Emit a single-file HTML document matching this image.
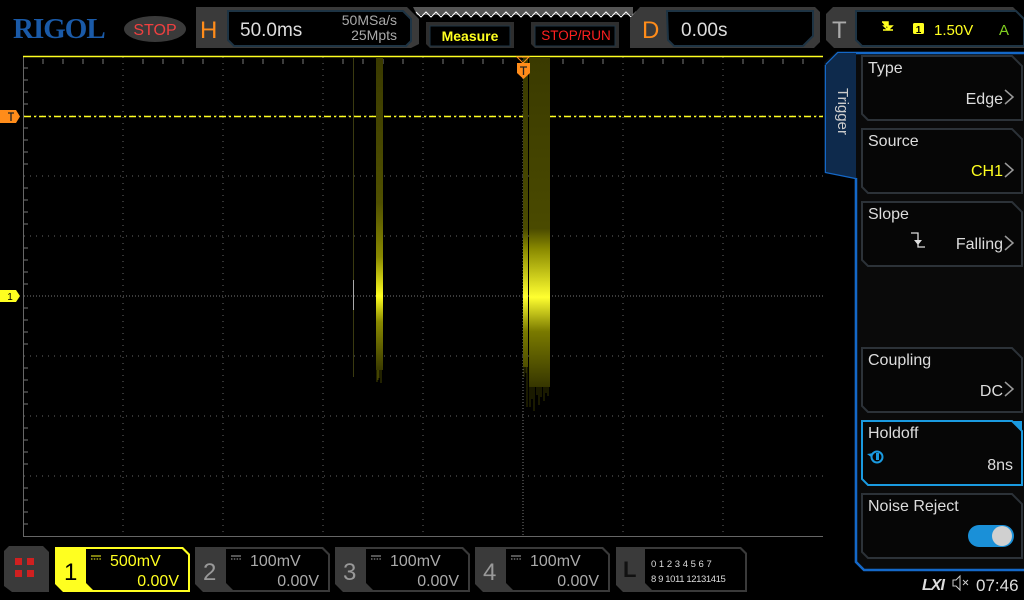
<!DOCTYPE html>
<html><head><meta charset="utf-8"><style>
body{margin:0;width:1024px;height:600px;background:#000;overflow:hidden;font-family:"Liberation Sans",sans-serif;position:relative}
.a{position:absolute}
</style></head><body>
<svg class="a" style="left:0;top:0" width="1024" height="600" viewBox="0 0 1024 600" font-family="Liberation Sans, sans-serif">
<defs>
<linearGradient id="g1" gradientUnits="userSpaceOnUse" x1="0" y1="57" x2="0" y2="380">
<stop offset="0" stop-color="#3a3a00"/><stop offset="0.45" stop-color="#505000"/><stop offset="0.62" stop-color="#8a8a00"/><stop offset="0.74" stop-color="#ffff20"/><stop offset="0.82" stop-color="#8a8a00"/><stop offset="1" stop-color="#2a2a00"/></linearGradient>
<linearGradient id="g2" gradientUnits="userSpaceOnUse" x1="0" y1="57" x2="0" y2="400">
<stop offset="0" stop-color="#3a3a00"/><stop offset="0.5" stop-color="#4a4a00"/><stop offset="0.56" stop-color="#8a8a00"/><stop offset="0.7" stop-color="#ffff30"/><stop offset="0.8" stop-color="#7a7a00"/><stop offset="1" stop-color="#262600"/></linearGradient>
</defs>
<text x="13" y="38" font-family="Liberation Serif, serif" font-weight="bold" font-size="29" fill="#1a5aa8" letter-spacing="-1">RIGOL</text>
<ellipse cx="155" cy="29" rx="31" ry="13" fill="#3a3a3a"/>
<text x="155" y="35" text-anchor="middle" font-size="16" fill="#f04040">STOP</text>
<path d="M196 7h211l12 12v25l-8 4H196z" fill="#3a3a3a"/>
<text x="200" y="38" font-size="24" fill="#ff8c1a">H</text>
<path d="M228 11h175l8 8v22l-5 5H234l-6-6z" fill="#000" stroke="#1e3444" stroke-width="2"/>
<text x="240" y="36" font-size="19" fill="#ddd">50.0ms</text>
<text x="397" y="25" font-size="14" fill="#aaa" text-anchor="end">50MSa/s</text>
<text x="397" y="40" font-size="14" fill="#aaa" text-anchor="end">25Mpts</text>
<path d="M413 7h220v8H417z" fill="#555"/>
<path d="M416 12 l5 5 5-5 5 5 5-5 5 5 5-5 5 5 5-5 5 5 5-5 5 5 5-5 5 5 5-5 5 5 5-5 5 5 5-5 5 5 5-5 5 5 5-5 5 5 5-5 5 5 5-5 5 5 5-5 5 5 5-5 5 5 5-5 5 5 5-5 5 5 5-5 5 5 5-5 5 5 5-5 5 5 5-5 5 5 5-5 5 5 5-5 5 5 5-5 5 5 5-5 5 5" fill="none" stroke="#fff" stroke-width="1"/>
<path d="M426 22h88v26h-84l-4-4z" fill="#2e2e2e"/><rect x="430" y="26" width="80" height="20" fill="#000" stroke="#1e3444"/>
<text x="470" y="41" text-anchor="middle" font-size="14" font-weight="bold" fill="#ffff20">Measure</text>
<path d="M531 22h88v26h-84l-4-4z" fill="#2e2e2e"/><rect x="535" y="26" width="80" height="20" fill="#000" stroke="#1e3444"/>
<text x="576" y="40" text-anchor="middle" font-size="13.5" fill="#ff2020">STOP/RUN</text>
<path d="M640 7h175l5 5v30l-6 6H630V18z" fill="#3a3a3a"/>
<text x="642" y="38" font-size="24" fill="#ff8c1a">D</text>
<path d="M667 11h146v25l-10 10H674l-6-6z" fill="#000" stroke="#1e3444" stroke-width="2"/>
<text x="681" y="36" font-size="19" fill="#ddd">0.00s</text>
<path d="M833 7h180l11 11v30H834l-8-8V14z" fill="#3a3a3a"/>
<text x="832" y="38" font-size="24" fill="#aaa">T</text>
<path d="M856 11h160l8 8v27H862l-6-6z" fill="#000" stroke="#1e3444" stroke-width="2"/>
<path d="M882 22h6v8M883 30h10M884 26l4 4 4-4z" stroke="#ffff20" fill="#ffff20" stroke-width="1.5"/>
<rect x="913" y="23" width="11" height="11" rx="1.5" fill="#ffff20"/><text x="918.5" y="33" font-size="10" text-anchor="middle" fill="#000" font-weight="bold">1</text>
<text x="934" y="35" font-size="15" fill="#ffff20">1.50V</text>
<text x="999" y="35" font-size="15" fill="#80d020">A</text>
<g stroke="#666" stroke-width="1" stroke-dasharray="1 5">
<path d="M123 57V536M223 57V536M323 57V536M423 57V536M623 57V536M723 57V536"/>
<path d="M24 116H823M24 176H823M24 236H823M24 356H823M24 416H823M24 476H823"/>
</g>
<path d="M24 296H823M523 57V536" stroke="#777" stroke-dasharray="1 2"/>
<path d="M23.5 57V536.5H823" stroke="#666" fill="none"/>
<g stroke="#777"><path d="M43 59v5M63 59v5M83 59v5M103 59v5M143 59v5M163 59v5M183 59v5M203 59v5M243 59v5M263 59v5M283 59v5M303 59v5M343 59v5M363 59v5M383 59v5M403 59v5M443 59v5M463 59v5M483 59v5M503 59v5M543 59v5M563 59v5M583 59v5M603 59v5M643 59v5M663 59v5M683 59v5M703 59v5M743 59v5M763 59v5M783 59v5M803 59v5"/>
<path d="M24 68h4M24 80h4M24 92h4M24 104h4M24 128h4M24 140h4M24 152h4M24 164h4M24 188h4M24 200h4M24 212h4M24 224h4M24 248h4M24 260h4M24 272h4M24 284h4M24 308h4M24 320h4M24 332h4M24 344h4M24 368h4M24 380h4M24 392h4M24 404h4M24 428h4M24 440h4M24 452h4M24 464h4M24 488h4M24 500h4M24 512h4M24 524h4"/></g>
<path d="M23 56.5H823" stroke="#ffff20" stroke-width="1.5"/>
<path d="M24 116.5H823" stroke="#ffff20" stroke-width="1.5" stroke-dasharray="7 3 2 3"/>
<rect x="353" y="57" width="1" height="320" fill="#3a3a10"/>
<rect x="353" y="280" width="1" height="30" fill="#aaa"/>
<rect x="376" y="57" width="7" height="313" fill="url(#g1)"/>
<path d="M377 370v12M379 370v8M381 370v13M378 370v10" stroke="#444400"/>
<rect x="523" y="57" width="5" height="310" fill="url(#g2)"/>
<rect x="529" y="57" width="21" height="330" fill="url(#g2)"/>
<path d="M524 367v10M526 367v6M530 387v20M532 387v12M534 387v24M537 387v8M539 387v18M541 387v10M544 387v14M546 387v6M548 387v9M527 367v40" stroke="#333300"/>
<path d="M0 110h16l4 6.5-4 6.5H0z" fill="#ff8c1a"/><path d="M8 113h6M11 113v8" stroke="#222" stroke-width="1.3"/>
<path d="M0 290h16l4 6-4 6H0z" fill="#ffff20"/><text x="10" y="300" font-size="10" text-anchor="middle" fill="#000">1</text>
<path d="M517 57h12l-6 6z" fill="none" stroke="#ff8c1a"/>
<path d="M517 63h13v10l-6.5 6-6.5-6z" fill="#ff8c1a"/><path d="M520 67h7M523.5 67v8" stroke="#222" stroke-width="1.3"/>
<path d="M857 52H1024V570H862l-8-8V178l-30-8V62l12-10" fill="#0a0a0a"/>
<path d="M826 65l12-12H1024M856 178L826 172V65M856 178V562l8 8H1024" fill="none" stroke="#1468c8" stroke-width="2.5"/>
<path d="M826 65l12-12h18v125l-30-6z" fill="#0e2a4c"/>
<text transform="translate(838 88) rotate(90)" font-size="15" fill="#ccc">Trigger</text>
<g fill="#060606" stroke="#2c3238" stroke-width="2">
<path d="M862 56h150l10 10v54H868l-6-6z"/>
<path d="M862 129h150l10 10v54H868l-6-6z"/>
<path d="M862 202h150l10 10v54H868l-6-6z"/>
<path d="M862 348h150l10 10v54H868l-6-6z"/>
<path d="M862 494h150l10 10v54H868l-6-6z"/>
</g>
<path d="M862 421h150l10 10v54H868l-6-6z" fill="#060606" stroke="#1a9ae0" stroke-width="2"/>
<path d="M1012 421l10 10v-10z" fill="#1a9ae0"/>
<g font-size="16" fill="#ddd">
<text x="868" y="73">Type</text><text x="1003" y="104" text-anchor="end">Edge</text>
<text x="868" y="146">Source</text><text x="1003" y="176" text-anchor="end" fill="#ffff20">CH1</text>
<text x="868" y="219">Slope</text><text x="1003" y="249" text-anchor="end">Falling</text>
<text x="868" y="365">Coupling</text><text x="1003" y="396" text-anchor="end">DC</text>
<text x="868" y="438">Holdoff</text><text x="1013" y="470" text-anchor="end">8ns</text>
<text x="868" y="511">Noise Reject</text>
</g>
<g fill="none" stroke="#999" stroke-width="1.5"><path d="M1005 90l8 7-8 7M1005 163l8 7-8 7M1005 236l8 7-8 7M1005 382l8 7-8 7"/></g>
<path d="M911 233h7v14h7" fill="none" stroke="#ddd" stroke-width="1.3"/><path d="M914 240h8l-4 5z" fill="#ddd"/>
<circle cx="877" cy="457" r="5.5" fill="none" stroke="#1a9ae0" stroke-width="2"/><path d="M867 454l4 3 3-4" fill="#1a9ae0"/><rect x="876" y="453" width="3" height="7" fill="#1a9ae0"/>
<rect x="968" y="525" width="46" height="22" rx="11" fill="#1a90d8"/><circle cx="1002" cy="536" r="10" fill="#d0d0d0"/>
<path d="M9 546h34l6 6v40H12l-8-6V551z" fill="#3a3a3a"/>
<rect x="15" y="558" width="7" height="7" fill="#d02020"/><rect x="27" y="558" width="7" height="7" fill="#d02020"/><rect x="15" y="570" width="7" height="7" fill="#d02020"/><rect x="27" y="570" width="7" height="7" fill="#d02020"/>
<path d="M55 547h128l7 7v38H63l-8-8z" fill="#ffff20"/><path d="M86 549h96l6 6v35H93l-7-7z" fill="#000"/>
<text x="64" y="580" font-size="24" fill="#000">1</text>
<path d="M91 556h10" stroke="#ffff20"/><path d="M91 559h10" stroke="#ffff20" stroke-dasharray="1.5 1.3"/>
<text x="110" y="566" font-size="16" fill="#ffff20">500mV</text><text x="179" y="586" font-size="16" fill="#ffff20" text-anchor="end">0.00V</text>
<g>
<path d="M195 547h128l7 7v38H203l-8-8z" fill="#3a3a3a"/><path d="M226 549h96l6 6v35H233l-7-7z" fill="#000"/>
<text x="203" y="580" font-size="24" fill="#999">2</text><path d="M231 556h10" stroke="#aaa"/><path d="M231 559h10" stroke="#aaa" stroke-dasharray="1.5 1.3"/>
<text x="250" y="566" font-size="16" fill="#aaa">100mV</text><text x="319" y="586" font-size="16" fill="#aaa" text-anchor="end">0.00V</text>
</g>
<g transform="translate(140 0)">
<path d="M195 547h128l7 7v38H203l-8-8z" fill="#3a3a3a"/><path d="M226 549h96l6 6v35H233l-7-7z" fill="#000"/>
<text x="203" y="580" font-size="24" fill="#999">3</text><path d="M231 556h10" stroke="#aaa"/><path d="M231 559h10" stroke="#aaa" stroke-dasharray="1.5 1.3"/>
<text x="250" y="566" font-size="16" fill="#aaa">100mV</text><text x="319" y="586" font-size="16" fill="#aaa" text-anchor="end">0.00V</text>
</g>
<g transform="translate(280 0)">
<path d="M195 547h128l7 7v38H203l-8-8z" fill="#3a3a3a"/><path d="M226 549h96l6 6v35H233l-7-7z" fill="#000"/>
<text x="203" y="580" font-size="24" fill="#999">4</text><path d="M231 556h10" stroke="#aaa"/><path d="M231 559h10" stroke="#aaa" stroke-dasharray="1.5 1.3"/>
<text x="250" y="566" font-size="16" fill="#aaa">100mV</text><text x="319" y="586" font-size="16" fill="#aaa" text-anchor="end">0.00V</text>
</g>
<path d="M616 547h125l6 6v39H623l-7-7z" fill="#3a3a3a"/><path d="M645 549h95l5 5v36H652l-7-7z" fill="#000"/>
<text x="623" y="577" font-size="22" fill="#111" font-weight="bold">L</text>
<text x="651" y="567" font-size="9.5" fill="#ddd">0 1 2 3  4 5 6 7</text>
<text x="651" y="582" font-size="9.5" fill="#ddd" letter-spacing="-0.4">8 9 1011 12131415</text>
<text x="922" y="590" font-size="16" font-style="italic" font-weight="bold" fill="#ddd" letter-spacing="-1">LXI</text>
<path d="M953 580h3l4-4v14l-4-4h-3z" fill="none" stroke="#ccc"/><path d="M963 580l5 5M968 580l-5 5" stroke="#ccc"/>
<text x="976" y="591" font-size="17" fill="#ddd">07:46</text>
</svg>
</body></html>
